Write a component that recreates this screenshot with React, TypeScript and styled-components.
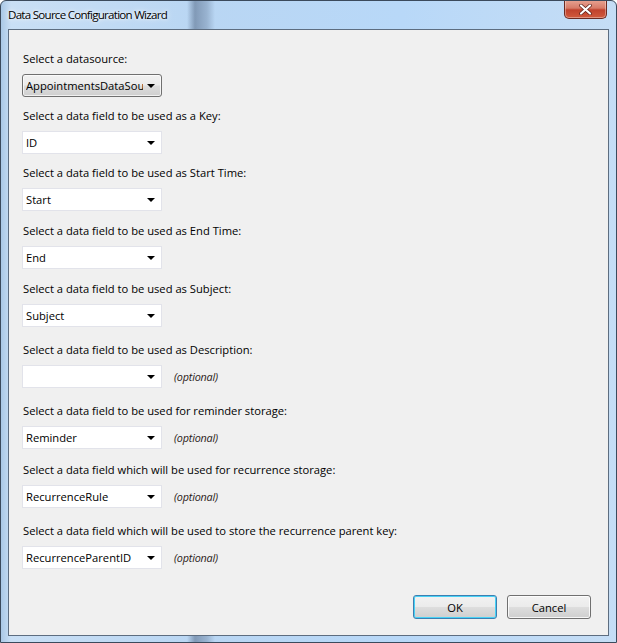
import React from "react";
import styled, { createGlobalStyle } from "styled-components";

const Global = createGlobalStyle`
  html, body { margin: 0; padding: 0; width: 617px; height: 643px; overflow: hidden; }
  body { font-family: "Segoe UI", "Open Sans", "Noto Sans", sans-serif; }
`;

const Window = styled.div`
  box-sizing: border-box;
  width: 617px;
  height: 643px;
  display: flex;
  flex-direction: column;
  border: 1px solid #3b4a5c;
  border-radius: 6px 6px 0 0;
  background:
    linear-gradient(90deg, rgba(120,140,170,0) 0px, rgba(120,140,170,0) 186px, rgba(60,80,110,0.45) 194px, rgba(80,100,130,0.3) 206px, rgba(120,140,170,0) 214px),
    linear-gradient(90deg, #aac8e6 0px, #c9dff5 10px, #b9d6f3 200px, #b8d8f8 400px, #c5ddf5 617px);
  overflow: hidden;
`;

const TitleBar = styled.div`
  height: 28px;
  display: flex;
  align-items: flex-start;
  justify-content: space-between;
  padding-left: 7px;
  padding-right: 9px;
`;

const Title = styled.div`
  margin-top: 6px;
  font-size: 11.6px;
  color: #000;
  letter-spacing: -0.75px;
  text-shadow: 0 0 6px rgba(255,255,255,0.9), 0 0 3px rgba(255,255,255,0.9);
`;

const CloseButton = styled.div`
  width: 43px;
  height: 19px;
  margin-top: -1px;
  box-sizing: border-box;
  border: 1px solid #6b2a22;
  border-top: none;
  border-radius: 0 0 5px 5px;
  background: linear-gradient(180deg, #e8a493 0%, #d77b68 45%, #c0422d 55%, #d15a3d 100%);
  box-shadow: inset 0 0 0 1px rgba(255,255,255,0.35);
  display: flex;
  align-items: center;
  justify-content: center;
`;

const Client = styled.div`
  flex: 1;
  margin: 0 7px 6px 7px;
  border: 1px solid #5d6d80;
  background: #f0f0f0;
  display: flex;
  flex-direction: column;
  padding: 0 0 0 13px;
`;

const Form = styled.div`
  display: flex;
  flex-direction: column;
`;

const Field = styled.div<{ $top: number }>`
  display: flex;
  flex-direction: column;
  margin-top: ${(p) => p.$top}px;
`;

const Label = styled.div`
  font-size: 11.2px;
  line-height: 15px;
  height: 15px;
  color: #000;
  padding-left: 1px;
  white-space: nowrap;
`;

const ComboRow = styled.div`
  display: flex;
  align-items: center;
  margin-top: 8px;
  gap: 12px;
`;

const Combo = styled.div<{ $button?: boolean }>`
  box-sizing: border-box;
  width: 140px;
  height: 23px;
  display: flex;
  align-items: center;
  padding: 0 6px 0 3px;
  font-size: 11.2px;
  color: #000;
  background: ${(p) =>
    p.$button
      ? "linear-gradient(180deg, #f2f2f2 0%, #ebebeb 48%, #dddddd 52%, #cfcfcf 100%)"
      : "#ffffff"};
  border: 1px solid ${(p) => (p.$button ? "#707070" : "#e2e3ea")};
  border-radius: ${(p) => (p.$button ? "3px" : "0")};
  box-shadow: ${(p) => (p.$button ? "inset 0 0 0 1px rgba(255,255,255,0.7)" : "none")};
`;

const ComboText = styled.span`
  flex: 1;
  overflow: hidden;
  white-space: nowrap;
`;

const Arrow = styled.span`
  width: 0;
  height: 0;
  border-left: 4px solid transparent;
  border-right: 4px solid transparent;
  border-top: 4px solid #000;
  margin-left: 4px;
`;

const Optional = styled.span`
  font-size: 10.8px;
  font-style: italic;
  color: #2b2118;
  letter-spacing: -0.2px;
`;

const ButtonRow = styled.div`
  margin-top: auto;
  margin-bottom: 16px;
  display: flex;
  justify-content: flex-end;
  gap: 10px;
  padding-right: 17px;
`;

const Button = styled.div<{ $default?: boolean }>`
  box-sizing: border-box;
  width: 84px;
  height: 24px;
  display: flex;
  align-items: center;
  justify-content: center;
  font-size: 11.2px;
  color: #000;
  border-radius: 3px;
  border: 1px solid ${(p) => (p.$default ? "#3c7fb1" : "#707070")};
  background: linear-gradient(180deg, #f2f2f2 0%, #ebebeb 48%, #dddddd 52%, #cfcfcf 100%);
  box-shadow: inset 0 0 0 1px ${(p) => (p.$default ? "#48d2f6" : "rgba(255,255,255,0.8)")};
`;

type FieldDef = { label: string; value: string; top: number; optional?: boolean; button?: boolean };

const fields: FieldDef[] = [
  { label: "Select a datasource:", value: "AppointmentsDataSource", top: 21, button: true },
  { label: "Select a data field to be used as a Key:", value: "ID", top: 11 },
  { label: "Select a data field to be used as Start Time:", value: "Start", top: 11 },
  { label: "Select a data field to be used as End Time:", value: "End", top: 12 },
  { label: "Select a data field to be used as Subject:", value: "Subject", top: 12 },
  { label: "Select a data field to be used as Description:", value: "", top: 15, optional: true },
  { label: "Select a data field to be used for reminder storage:", value: "Reminder", top: 15, optional: true },
  { label: "Select a data field which will be used for recurrence storage:", value: "RecurrenceRule", top: 13, optional: true },
  { label: "Select a data field which will be used to store the recurrence parent key:", value: "RecurrenceParentID", top: 15, optional: true },
];

export default function App() {
  return (
    <>
      <Global />
      <Window>
        <TitleBar>
          <Title>Data Source Configuration Wizard</Title>
          <CloseButton>
            <svg width="13" height="11" viewBox="0 0 13 11">
              <path
                d="M2 1.5 L11 9.5 M11 1.5 L2 9.5"
                stroke="#5a1f18"
                strokeWidth="3.6"
                strokeLinecap="round"
              />
              <path
                d="M2 1.5 L11 9.5 M11 1.5 L2 9.5"
                stroke="#ffffff"
                strokeWidth="2.2"
                strokeLinecap="round"
              />
            </svg>
          </CloseButton>
        </TitleBar>
        <Client>
          <Form>
            {fields.map((f) => (
              <Field key={f.label} $top={f.top}>
                <Label>{f.label}</Label>
                <ComboRow>
                  <Combo $button={f.button}>
                    <ComboText>{f.value}</ComboText>
                    <Arrow />
                  </Combo>
                  {f.optional && <Optional>(optional)</Optional>}
                </ComboRow>
              </Field>
            ))}
          </Form>
          <ButtonRow>
            <Button $default>OK</Button>
            <Button>Cancel</Button>
          </ButtonRow>
        </Client>
      </Window>
    </>
  );
}
